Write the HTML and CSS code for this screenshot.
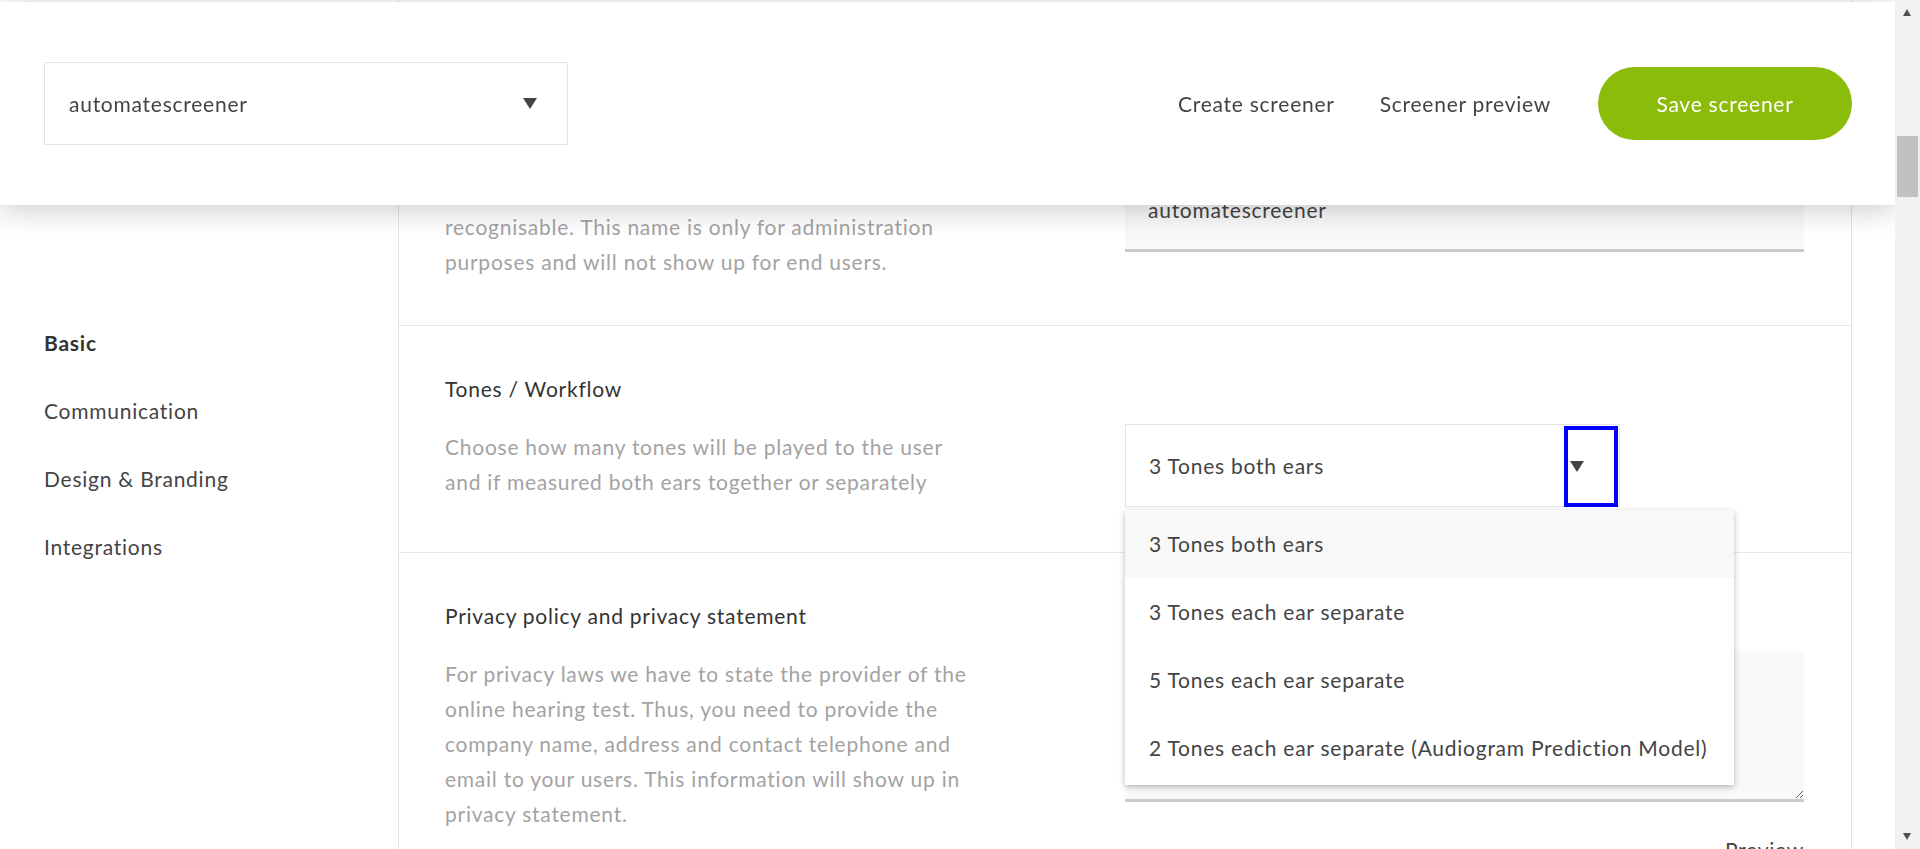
FILE: index.html
```html
<!DOCTYPE html>
<html lang="en">
<head>
<meta charset="utf-8">
<title>Screener settings</title>
<link rel="stylesheet" href="styles.css">
</head>
<body>
<header class="topbar">
  <div class="picker">
    <span class="picker-value">automatescreener</span>
    <span class="caret"></span>
  </div>
  <nav class="actions">
    <a class="action-link" href="#">Create screener</a>
    <a class="action-link" href="#">Screener preview</a>
    <button class="save-btn" type="button">Save screener</button>
  </nav>
</header>

<div class="layout">
  <aside class="sidebar">
    <ul class="side-nav">
      <li class="side-item active">Basic</li>
      <li class="side-item">Communication</li>
      <li class="side-item">Design &amp; Branding</li>
      <li class="side-item">Integrations</li>
    </ul>
  </aside>

  <main class="panel">
    <section class="setting">
      <h3 class="setting-title">Screener name</h3>
      <p class="setting-desc">Give the screener a name to make it easily<br>recognisable. This name is only for administration<br>purposes and will not show up for end users.</p>
      <div class="setting-control">
        <div class="text-input">automatescreener</div>
      </div>
    </section>

    <section class="setting">
      <h3 class="setting-title">Tones / Workflow</h3>
      <p class="setting-desc">Choose how many tones will be played to the user<br>and if measured both ears together or separately</p>
      <div class="setting-control">
        <div class="dropdown">
          <div class="select">
            <span class="select-value">3 Tones both ears</span>
            <span class="select-toggle"><span class="caret"></span></span>
          </div>
          <ul class="menu">
            <li class="menu-item hover">3 Tones both ears</li>
            <li class="menu-item">3 Tones each ear separate</li>
            <li class="menu-item">5 Tones each ear separate</li>
            <li class="menu-item">2 Tones each ear separate (Audiogram Prediction Model)</li>
          </ul>
        </div>
      </div>
    </section>

    <section class="setting">
      <h3 class="setting-title">Privacy policy and privacy statement</h3>
      <p class="setting-desc">For privacy laws we have to state the provider of the<br>online hearing test. Thus, you need to provide the<br>company name, address and contact telephone and<br>email to your users. This information will show up in<br>privacy statement.</p>
      <div class="setting-control">
        <textarea class="text-area"></textarea>
        <a class="preview-link" href="#">Preview</a>
      </div>
    </section>
  </main>
</div>

<div class="scrollbar">
  <span class="sb-arrow up"></span>
  <span class="sb-thumb"></span>
  <span class="sb-arrow down"></span>
</div>
</body>
</html>
```

FILE: styles.css
```css
html, body {
  margin: 0;
  padding: 0;
  height: 100%;
  overflow: hidden;
  background: #fff;
}

body {
  font-family: Lato, "Open Sans", "Liberation Sans", sans-serif;
  font-size: 21px;
  letter-spacing: 0.75px;
  color: #444;
}

/* ---------- header ---------- */
.topbar {
  position: fixed;
  top: 2px;
  left: 0;
  right: 25px;
  height: 203px;
  background: #fff;
  box-shadow: 0 4px 28px rgba(0, 0, 0, 0.22);
  display: flex;
  align-items: center;
  justify-content: space-between;
  padding: 0 43px 0 44px;
  box-sizing: border-box;
  z-index: 10;
}

.picker {
  width: 524px;
  height: 83px;
  box-sizing: border-box;
  border: 1px solid #e4e4e4;
  display: flex;
  align-items: center;
  justify-content: space-between;
  padding: 0 30px 0 24px;
  color: #444;
}

.caret {
  display: block;
  width: 0;
  height: 0;
  border-left: 7.5px solid transparent;
  border-right: 7.5px solid transparent;
  border-top: 11px solid #454540;
}

.actions {
  display: flex;
  align-items: center;
}

.action-link {
  color: #444;
  text-decoration: none;
  margin-right: 45px;
}

.save-btn {
  width: 254px;
  height: 73px;
  border: 0;
  border-radius: 37px;
  background: #8cbc0a;
  color: #fff;
  font: inherit;
  letter-spacing: inherit;
  margin-left: 2px;
}

/* ---------- layout ---------- */
.layout {
  display: flex;
  width: 1895px;
  min-height: 100vh;
  padding-left: 44px;
  box-sizing: border-box;
}

.sidebar {
  width: 354px;
  padding-top: 309px;
}

.side-nav {
  list-style: none;
  margin: 0;
  padding: 0;
}

.side-item {
  height: 68px;
  line-height: 68px;
  color: #444;
}

.side-item.active {
  color: #333;
  font-weight: 700;
}

.panel {
  width: 1454px;
  box-sizing: border-box;
  border-left: 1px solid #e4e4e4;
  border-right: 1px solid #e4e4e4;
  padding-top: 71px;
}

/* ---------- settings ---------- */
.setting {
  display: grid;
  grid-template-columns: 1fr 680px;
  grid-template-rows: auto auto;
  padding: 45px 46px 45px 46px;
  border-bottom: 1px solid #e6e6e6;
}

.setting:first-child {
  padding-bottom: 46px;
}

.setting-title {
  grid-column: 1;
  grid-row: 1;
  margin: 0 0 18px;
  font-size: 21px;
  font-weight: 400;
  line-height: 35px;
  color: #333;
}

.setting-desc {
  grid-column: 1;
  grid-row: 2;
  margin: 5px 0 0;
  line-height: 35px;
  color: #a3a3a3;
  white-space: nowrap;
}

.setting-control {
  grid-column: 2;
  grid-row: 2;
  display: flex;
  flex-direction: column;
  align-items: flex-start;
}

.text-input {
  width: 679px;
  height: 83px;
  box-sizing: border-box;
  background: #f9f9f9;
  border-bottom: 3px solid #cbcbcb;
  padding-left: 23px;
  display: flex;
  align-items: center;
  color: #444;
}

/* ---------- dropdown ---------- */
.dropdown {
  position: relative;
  width: 495px;
}

.select {
  height: 83px;
  box-sizing: border-box;
  border: 1px solid #e4e4e4;
  display: flex;
  align-items: center;
  padding-left: 23px;
}

.select-value {
  flex: 1;
  color: #444;
}

.select-toggle {
  align-self: flex-start;
  width: 54px;
  height: 81px;
  box-sizing: border-box;
  margin: 1px 1px 0 0;
  border: 4px solid #0000fe;
  display: flex;
  align-items: center;
  padding-left: 2px;
}

.menu {
  position: absolute;
  top: 86px;
  left: 0;
  width: 609px;
  margin: 0;
  padding: 0 0 3px;
  list-style: none;
  background: #fff;
  box-shadow: 0 2px 6px rgba(0, 0, 0, 0.28);
  z-index: 5;
}

.menu-item {
  height: 68px;
  line-height: 68px;
  padding-left: 24px;
  color: #444;
  white-space: nowrap;
}

.menu-item.hover {
  background: #f8f8f8;
}

/* ---------- textarea ---------- */
.text-area {
  display: block;
  width: 679px;
  height: 151px;
  box-sizing: border-box;
  margin: 0;
  border: 0;
  border-bottom: 3px solid #cbcbcb;
  background: #f9f9f9;
  resize: vertical;
  font: inherit;
}

.preview-link {
  align-self: flex-end;
  margin: 30px 1px 0 0;
  color: #444;
  text-decoration: none;
  line-height: 35px;
}

/* ---------- scrollbar ---------- */
.scrollbar {
  position: fixed;
  top: 0;
  right: 0;
  width: 25px;
  height: 100%;
  background: #f1f1f1;
  z-index: 20;
}

.sb-thumb {
  position: absolute;
  top: 136px;
  left: 2px;
  width: 21px;
  height: 61px;
  background: #c1c1c1;
}

.sb-arrow {
  position: absolute;
  left: 8px;
  width: 0;
  height: 0;
  border-left: 4.5px solid transparent;
  border-right: 4.5px solid transparent;
}

.sb-arrow.up {
  top: 9px;
  border-bottom: 7px solid #505050;
}

.sb-arrow.down {
  bottom: 9px;
  border-top: 7px solid #505050;
}
```
